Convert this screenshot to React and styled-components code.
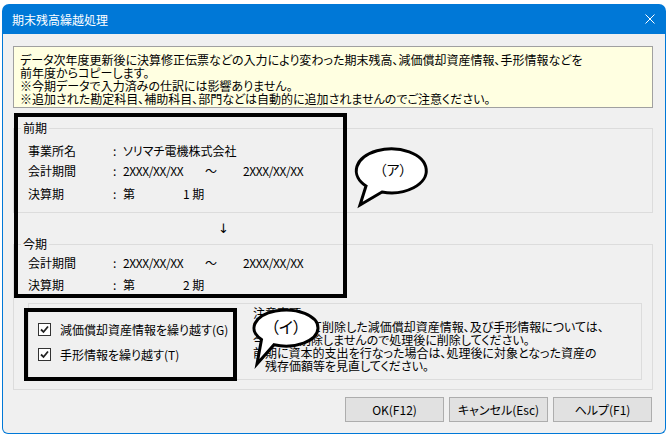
import React from 'react'
import styled, { createGlobalStyle } from 'styled-components'

const GlobalStyle = createGlobalStyle`
  html, body {
    margin: 0;
    padding: 0;
    background: #fff;
  }
  body {
    font-family: "Noto Sans CJK JP", "Noto Sans", sans-serif;
    font-size: 12px;
    color: #000;
    font-feature-settings: "palt";
  }
`

const Window = styled.div`
  position: relative;
  margin: 4px 0 0 2px;
  width: 664px;
  display: flex;
  flex-direction: column;
`

const TitleBar = styled.div`
  height: 30px;
  background: #0078d7;
  border-radius: 7px 7px 0 0;
  display: flex;
  align-items: center;
  justify-content: space-between;
  padding: 0 11px 0 10px;
  color: #fff;
  font-size: 12px;
`

const Body = styled.div`
  background: #f0f0f0;
  border: 1px solid #0078d7;
  border-top: none;
  border-radius: 0 0 6px 6px;
  padding: 12px 12px 11px 10px;
  display: flex;
  flex-direction: column;
`

const Notice = styled.div`
  box-sizing: border-box;
  height: 62px;
  background: #ffffe1;
  border: 1px solid #a0a0a0;
  padding: 6px 7px 3px 6px;
  line-height: 13px;
`

const Group = styled.fieldset`
  margin: ${p => p.$mt || 0}px 0 0;
  padding: 0 10px ${p => p.$pb || 0}px 14px;
  border: 1px solid #dcdcdc;
  min-width: 0;
`

const Caption = styled.legend`
  margin-left: -7px;
  padding: 0 2px;
  line-height: 14px;
`

const InfoList = styled.div`
  margin-top: ${p => p.$mt}px;
  display: flex;
  flex-direction: column;
`

const InfoRow = styled.div`
  height: ${p => p.$h}px;
  display: flex;
  align-items: center;
  white-space: nowrap;
`

const Label = styled.span`
  width: 85px;
`

const Colon = styled.span`
  width: 10px;
`

const DateText = styled.span`
  width: ${p => p.$w}px;
  letter-spacing: -0.4px;
`

const Tilde = styled.span`
  width: 38px;
`

const Term = styled.span`
  width: 60px;
`

const ArrowRow = styled.div`
  height: 24px;
  box-sizing: border-box;
  padding: 9px 0 0 205px;
  line-height: 14px;
  font-family: "DejaVu Sans", sans-serif;
  font-size: 13px;
  color: #000;
`

const OptionsBox = styled.div`
  box-sizing: border-box;
  height: 77px;
  margin: 7px 0 9px;
  border: 1px solid #dcdcdc;
  display: flex;
  align-items: flex-start;
`

const Checks = styled.div`
  width: 215px;
  padding: 15px 0 0 9px;
  display: flex;
  flex-direction: column;
  gap: 5px;
`

const CheckRow = styled.label`
  height: 20px;
  display: flex;
  align-items: center;
  gap: 9px;
  white-space: nowrap;
`

const Box = styled.span`
  box-sizing: border-box;
  width: 13px;
  height: 13px;
  background: #fff;
  border: 1px solid #333;
  display: flex;
  align-items: center;
  justify-content: center;
`

const Notes = styled.div`
  padding-top: 1px;
  line-height: 13px;
  white-space: nowrap;
`

const NoteHead = styled.div`
  height: 15px;
  line-height: 15px;
`

const NoteLine = styled.div`
  padding-left: ${p => p.$indent || 0}px;
`

const ButtonRow = styled.div`
  margin-top: 7px;
  padding-right: 1px;
  display: flex;
  justify-content: flex-end;
  gap: 5px;
`

const Button = styled.button`
  width: 99px;
  height: 25px;
  background: #e1e1e1;
  border: 1px solid #adadad;
  font-family: inherit;
  font-size: 12px;
  font-feature-settings: "palt";
  color: #000;
  padding: 0;
`

const Frame = styled.div`
  position: absolute;
  box-sizing: border-box;
  left: ${p => p.$x}px;
  top: ${p => p.$y}px;
  width: ${p => p.$w}px;
  height: ${p => p.$h}px;
  border: 4px solid #000;
  pointer-events: none;
`

const Balloon = styled.svg`
  position: absolute;
  left: ${p => p.$x}px;
  top: ${p => p.$y}px;
  overflow: visible;
`

const Check = () => (
  <Box>
    <svg width="9" height="9" viewBox="0 0 9 9">
      <path d="M1 4.5 L3.5 7 L8 1.5" fill="none" stroke="#222" strokeWidth="1.8" />
    </svg>
  </Box>
)

const App = () => {
  return (
    <>
      <GlobalStyle />
      <Window>
        <TitleBar>
          <span>期末残高繰越処理</span>
          <svg width="10" height="10" viewBox="0 0 10 10">
            <path d="M0.5 0.5 L9.5 9.5 M9.5 0.5 L0.5 9.5" stroke="#fff" strokeWidth="1" />
          </svg>
        </TitleBar>
        <Body>
          <Notice>
            データ次年度更新後に決算修正伝票などの入力により変わった期末残高、減価償却資産情報、手形情報などを<br />
            前年度からコピーします。<br />
            ※今期データで入力済みの仕訳には影響ありません。<br />
            ※追加された勘定科目、補助科目、部門などは自動的に追加されませんのでご注意ください。
          </Notice>

          <Group $mt={13} $pb={6}>
            <Caption>前期</Caption>
            <InfoList $mt={5}>
              <InfoRow $h={20}>
                <Label>事業所名</Label>
                <Colon>:</Colon>
                <span>ソリマチ電機株式会社</span>
              </InfoRow>
              <InfoRow $h={20}>
                <Label>会計期間</Label>
                <Colon>:</Colon>
                <DateText $w={82}>2XXX/XX/XX</DateText>
                <Tilde>〜</Tilde>
                <DateText>2XXX/XX/XX</DateText>
              </InfoRow>
              <InfoRow $h={26}>
                <Label>決算期</Label>
                <Colon>:</Colon>
                <Term>第</Term>
                <span>1 期</span>
              </InfoRow>
            </InfoList>
          </Group>

          <ArrowRow>↓</ArrowRow>

          <Group>
            <Caption>今期</Caption>
            <InfoList $mt={1}>
              <InfoRow $h={20}>
                <Label>会計期間</Label>
                <Colon>:</Colon>
                <DateText $w={82}>2XXX/XX/XX</DateText>
                <Tilde>〜</Tilde>
                <DateText>2XXX/XX/XX</DateText>
              </InfoRow>
              <InfoRow $h={24}>
                <Label>決算期</Label>
                <Colon>:</Colon>
                <Term>第</Term>
                <span>2 期</span>
              </InfoRow>
            </InfoList>
            <OptionsBox>
              <Checks>
                <CheckRow>
                  <Check />
                  減価償却資産情報を繰り越す(G)
                </CheckRow>
                <CheckRow>
                  <Check />
                  手形情報を繰り越す(T)
                </CheckRow>
              </Checks>
              <Notes>
                <NoteHead>注意事項</NoteHead>
                <NoteLine>前期において削除した減価償却資産情報、及び手形情報については、</NoteLine>
                <NoteLine>今期から削除しませんので処理後に削除してください。</NoteLine>
                <NoteLine>前期に資本的支出を行なった場合は、処理後に対象となった資産の</NoteLine>
                <NoteLine $indent={12}>残存価額等を見直してください。</NoteLine>
              </Notes>
            </OptionsBox>
          </Group>

          <ButtonRow>
            <Button>OK(F12)</Button>
            <Button>キャンセル(Esc)</Button>
            <Button>ヘルプ(F1)</Button>
          </ButtonRow>
        </Body>

        <Frame $x={12} $y={109} $w={333} $h={185} />
        <Frame $x={22} $y={304} $w={213} $h={73} />

        <Balloon $x={348} $y={136} width="90" height="72" viewBox="350 140 90 72">
          <path
            d="M366 186 L360 205 L382 192 A35 22 0 1 0 366 186 Z"
            fill="#fff"
            stroke="#000"
            strokeWidth="3"
            strokeLinejoin="miter"
          />
          <text x="393" y="175" fontSize="14" textAnchor="middle" fill="#000">（ア）</text>
        </Balloon>

        <Balloon $x={248} $y={302} width="80" height="66" viewBox="250 306 80 66">
          <path
            d="M261.5 339.6 L257 364 L274 344.7 A32 18 0 1 0 261.5 339.6 Z"
            fill="#fff"
            stroke="#000"
            strokeWidth="3"
          />
          <text x="286" y="333" fontSize="16" textAnchor="middle" fill="#000">（イ）</text>
        </Balloon>
      </Window>
    </>
  )
}

export default App
